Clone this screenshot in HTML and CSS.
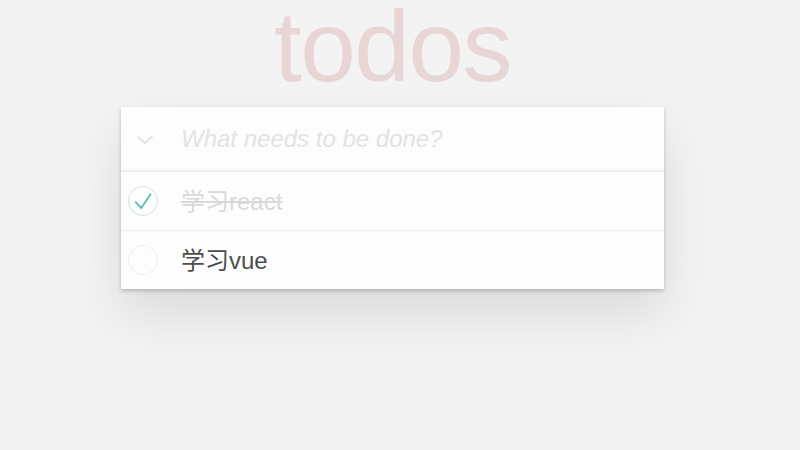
FILE: index.html
```html
<!DOCTYPE html>
<html lang="zh">
<head>
<meta charset="utf-8">
<title>Todos</title>
<link rel="stylesheet" href="styles.css">
</head>
<body>
<section class="todoapp">
  <header class="header">
    <h1 class="title">todos</h1>
    <div class="new-row">
      <span class="toggle-all">
        <svg width="18" height="10" viewBox="0 0 18 10"><polyline points="1.5,1.5 9,8 16.5,1.5" fill="none" stroke="#e3e3e3" stroke-width="2"/></svg>
      </span>
      <input class="new-todo" placeholder="What needs to be done?">
    </div>
  </header>
  <ul class="todo-list">
    <li class="todo done">
      <span class="toggle">
        <svg width="32" height="32" viewBox="0 0 32 32"><circle cx="16" cy="16" r="14.5" fill="none" stroke="#cfe3df" stroke-width="1"/><polyline points="8.2,16.6 14.2,23 23.9,8.8" fill="none" stroke="#5dc2af" stroke-width="1.9"/></svg>
      </span>
      <label class="text">学习react</label>
    </li>
    <li class="todo">
      <span class="toggle">
        <svg width="32" height="32" viewBox="0 0 32 32"><circle cx="16" cy="16" r="14.5" fill="none" stroke="#ededed" stroke-width="1"/></svg>
      </span>
      <label class="text">学习vue</label>
    </li>
  </ul>
</section>
</body>
</html>
```

FILE: styles.css
```css
html, body {
  margin: 0;
  padding: 0;
}
body {
  background: #f3f3f3;
  font-family: "Liberation Sans", Arial, "Noto Sans CJK SC", sans-serif;
  color: #4d4d4d;
  height: 450px;
  overflow: hidden;
}
.todoapp {
  position: relative;
  width: 543px;
  margin: 107px 0 0 121px;
  background: #fefdfe;
  box-shadow: 0 2px 4px rgba(0, 0, 0, 0.2), 0 25px 50px rgba(0, 0, 0, 0.1);
}
.title {
  position: absolute;
  top: -107px;
  left: 0;
  width: 100%;
  margin: 0;
  font-size: 100px;
  line-height: 92px;
  font-weight: normal;
  letter-spacing: -1.5px;
  text-align: center;
  color: rgba(175, 47, 47, 0.15);
}
.new-row {
  display: flex;
  align-items: center;
  height: 64px;
  box-shadow: inset 0 -2px 1px rgba(0, 0, 0, 0.03);
}
.toggle-all {
  width: 60px;
  display: flex;
  justify-content: flex-start;
  padding-left: 15px;
  box-sizing: border-box;
  margin-top: 2px;
}
.toggle-all svg {
  display: block;
}
.new-todo {
  flex: 1;
  border: 0;
  outline: none;
  background: transparent;
  font-family: inherit;
  font-size: 24px;
  padding: 0;
  color: #4d4d4d;
}
.new-todo::placeholder {
  font-style: italic;
  color: #e3e3e3;
}
.todo-list {
  list-style: none;
  margin: 0;
  padding: 0;
  border-top: 1px solid #e6e6e6;
}
.todo {
  display: flex;
  align-items: center;
  height: 58px;
  border-bottom: 1px solid #ededed;
}
.todo:last-child {
  border-bottom: 0;
}
.toggle {
  width: 60px;
  padding-left: 6px;
  box-sizing: border-box;
  display: flex;
  align-items: center;
}
.toggle svg {
  display: block;
}
.text {
  font-size: 24px;
  line-height: 29px;
  color: #4d4d4d;
  margin-top: 1px;
}
.done .text {
  color: #d9d9d9;
  text-decoration: line-through;
}
```
